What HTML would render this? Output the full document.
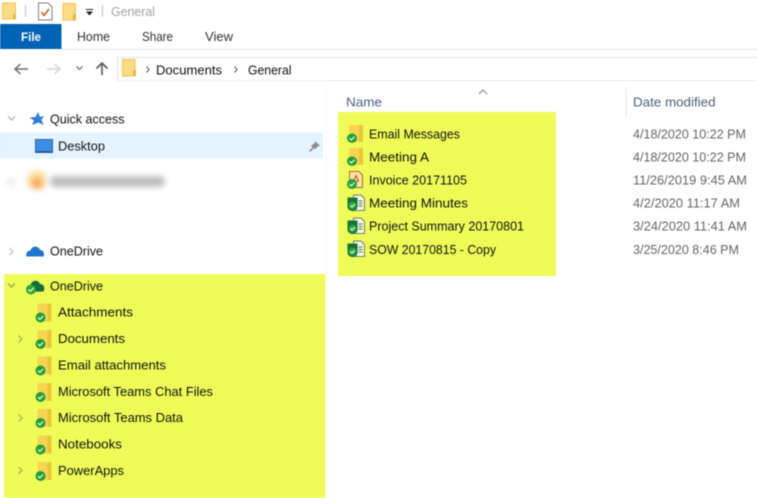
<!DOCTYPE html>
<html><head><meta charset="utf-8"><style>
html,body{margin:0;padding:0;background:#fff;width:757px;height:498px;overflow:hidden}
svg{display:block;filter:blur(.45px)}
text{font-family:"Liberation Sans",sans-serif;font-size:12.5px;fill:#111}
.g{fill:#666}
.m{fill:#333}
</style></head><body>
<svg width="757" height="498" viewBox="0 0 757 498" xmlns="http://www.w3.org/2000/svg">
<defs>
<symbol id="ok" overflow="visible"><circle cx="0" cy="0" r="5" fill="#1f9e3c"/><path d="M-2.500 0 L-.7 1.900 L2.600 -1.600" fill="none" stroke="#dff7c4" stroke-width="1.300"/></symbol>
<symbol id="sf" overflow="visible"><path d="M0 0H14V18H0Z" fill="#f7d550"/><path d="M10 0H14V18H10Z" fill="#ecc43a"/><use href="#ok" x="3" y="14"/></symbol>
<symbol id="doc" overflow="visible"><path d="M6 .5H13.500L17 4V16H6Z" fill="#f6f7e2" stroke="#75806a"/><path d="M11 6.500H15M11 9H15M11 11.500H15" stroke="#3d7c55"/><path d="M0 3H10V12C10 15 7 16.500 5 16.500C3 16.500 0 15 0 12Z" fill="#16713d"/><circle cx="5" cy="11" r="3.900" fill="#2aa63c"/><path d="M3 11 L4.500 12.600 L7.300 9.600" fill="none" stroke="#e6f8cd" stroke-width="1.200"/></symbol>
</defs>
<rect width="757" height="498" fill="#fff"/>

<!-- title bar -->
<path d="M2.500 3H15.500V19H2.500Z" fill="#fbdc82" stroke="#efc550"/>
<rect x="13" y="14" width="3" height="5" fill="#e5b93f"/>
<rect x="25" y="5" width="1" height="12" fill="#c4c4c4"/>
<path d="M38.500 3H48L52 7V20H38.500Z" fill="#fff" stroke="#7f7f7f"/>
<path d="M41.500 12 L44 15.500 L49 9" fill="none" stroke="#c85a22" stroke-width="1.500"/>
<path d="M63 3.500H75.500V20H63Z" fill="#fbdc82" stroke="#efc550"/>
<rect x="73" y="14" width="3" height="6" fill="#e5b93f"/>
<rect x="86" y="9" width="7" height="1" fill="#222"/>
<path d="M86 11.500H93L89.500 15.500Z" fill="#222"/>
<rect x="102" y="5" width="1" height="12" fill="#c4c4c4"/>
<text x="111" y="16" textLength="44" lengthAdjust="spacingAndGlyphs" style="fill:#a2a2a2">General</text>

<!-- ribbon -->
<rect x="0" y="24" width="61.500" height="25" fill="#0163b5"/>
<rect x="61" y="49" width="696" height="1" fill="#e6e6e6"/>
<text x="21" y="41" textLength="20" lengthAdjust="spacingAndGlyphs" style="fill:#fff;font-weight:bold;font-size:12px">File</text>
<text x="77" y="41" textLength="33" lengthAdjust="spacingAndGlyphs" class="m">Home</text>
<text x="142" y="41" textLength="31" lengthAdjust="spacingAndGlyphs" class="m">Share</text>
<text x="205" y="41" textLength="28" lengthAdjust="spacingAndGlyphs" class="m">View</text>

<!-- nav -->
<path d="M28 69H15.500M20.500 64 L15 69 L20.500 74" fill="none" stroke="#6e6e6e" stroke-width="1.500"/>
<path d="M47 69H59.500M54.500 64 L60 69 L54.500 74" fill="none" stroke="#d6d6d6" stroke-width="1.500"/>
<path d="M76.500 66.500 L79.500 69.500 L82.500 66.500" fill="none" stroke="#757575" stroke-width="1.300"/>
<path d="M102 75V63M96.500 68.500 L102 63 L107.500 68.500" fill="none" stroke="#5e5e5e" stroke-width="1.700"/>
<path d="M117.500 81V57.500H757" fill="none" stroke="#e2e2e2"/>
<path d="M117.500 80.500H757" fill="none" stroke="#eeeeee"/>
<path d="M122.500 59.500H135V76H122.500Z" fill="#fbdc82" stroke="#efc550"/>
<rect x="133" y="70" width="3" height="6" fill="#e5b93f"/>
<path d="M146.500 66.500 L149 69.500 L146.500 72.500" fill="none" stroke="#6d6d6d" stroke-width="1.200"/>
<text x="156" y="74.500" textLength="66" lengthAdjust="spacingAndGlyphs">Documents</text>
<path d="M234.500 66.500 L237 69.500 L234.500 72.500" fill="none" stroke="#6d6d6d" stroke-width="1.200"/>
<text x="248" y="74.500" textLength="43.500" lengthAdjust="spacingAndGlyphs">General</text>

<!-- sidebar -->
<path d="M326.500 88V274" stroke="#f0f0f0" stroke-dasharray="1 1"/>
<path d="M8 116.500 L11.500 120 L15 116.500" fill="none" stroke="#a8a8a8" stroke-width="1.200"/>
<path d="M38 112 L40 117 L44 116 L41.500 120 L43.500 125 L38.500 122.500 L32 125 L34 120.500 L29.500 117.500 L35.500 117Z" fill="#2f7fd6"/>
<text x="50" y="123.500" textLength="74.500" lengthAdjust="spacingAndGlyphs">Quick access</text>
<rect x="0" y="132.500" width="323" height="26" fill="#e5f3ff"/>
<rect x="35.500" y="139.500" width="17" height="13" fill="#3a8ee4" stroke="#34689e"/>
<rect x="35" y="151" width="18" height="2" fill="#2a5f96"/>
<text x="58" y="150.500" textLength="47" lengthAdjust="spacingAndGlyphs">Desktop</text>
<path d="M315 141 L320 146 L317.500 146.500 L315 149.500 L314 148 L310 152 L309 151 L312.500 147 L311 145.500 L314.500 143.500Z" fill="#8c8c8c"/>

<g style="filter:blur(3px)">
<circle cx="37" cy="180" r="10" fill="#fde3a6"/>
<circle cx="37" cy="183" r="6" fill="#f9ad66"/>
<rect x="50" y="176" width="115" height="11" rx="5" fill="#a8a8a8" opacity=".75"/>
<circle cx="11" cy="182" r="4" fill="#eaeaea"/>
</g>

<path d="M9.500 248 L13 251.500 L9.500 255" fill="none" stroke="#c4c4c4" stroke-width="1.300"/>
<path d="M26.500 256.500 C25.500 252.500 28 250.500 30.500 250.500 C32 245.500 38.500 245.500 40 250 C43 250 45 253 43.500 256.500Z" fill="#1f74cc"/>
<text x="50" y="255.500" textLength="53" lengthAdjust="spacingAndGlyphs">OneDrive</text>

<!-- left yellow panel -->
<rect x="4" y="274" width="321.500" height="224" fill="#effc58"/>
<path d="M8 283.500 L11.500 287 L15 283.500" fill="none" stroke="#8f9a48" stroke-width="1.200"/>
<path d="M26.500 292 C25.500 287 28 285 30.500 285 C32 279.500 38.500 279.500 40 284 C43.500 283.500 45.500 288 43.500 291.500Z" fill="#126f3c"/>
<circle cx="31" cy="289.500" r="5" fill="#2aa63c"/>
<path d="M28.500 289.500 L30.300 291.400 L33.600 287.900" fill="none" stroke="#e6f8cd" stroke-width="1.300"/>
<text x="50" y="290.500" textLength="53" lengthAdjust="spacingAndGlyphs">OneDrive</text>

<use href="#sf" x="37.500" y="303.500"/>
<text x="58" y="316.500" textLength="75" lengthAdjust="spacingAndGlyphs">Attachments</text>
<use href="#sf" x="37.500" y="330"/>
<path d="M18.500 335.500 L22 339 L18.500 342.500" fill="none" stroke="#a9b45a" stroke-width="1.300"/>
<text x="58" y="343" textLength="67" lengthAdjust="spacingAndGlyphs">Documents</text>
<use href="#sf" x="37.500" y="356.500"/>
<text x="58" y="369.500" textLength="108" lengthAdjust="spacingAndGlyphs">Email attachments</text>
<use href="#sf" x="37.500" y="383"/>
<text x="58" y="396" textLength="155" lengthAdjust="spacingAndGlyphs">Microsoft Teams Chat Files</text>
<use href="#sf" x="37.500" y="409"/>
<path d="M18.500 414.500 L22 418 L18.500 421.500" fill="none" stroke="#a9b45a" stroke-width="1.300"/>
<text x="58" y="422" textLength="125" lengthAdjust="spacingAndGlyphs">Microsoft Teams Data</text>
<use href="#sf" x="37.500" y="435.500"/>
<text x="58" y="448.500" textLength="64" lengthAdjust="spacingAndGlyphs">Notebooks</text>
<use href="#sf" x="37.500" y="462"/>
<path d="M18.500 467 L22 470.500 L18.500 474" fill="none" stroke="#a9b45a" stroke-width="1.300"/>
<text x="58" y="475" textLength="66" lengthAdjust="spacingAndGlyphs">PowerApps</text>

<!-- right pane -->
<rect x="327" y="80.500" width="430" height="1" fill="#f0f0f0"/>
<path d="M479 94 L483 90 L487 94" fill="none" stroke="#8a8a8a" stroke-width="1.200"/>
<text x="346" y="106.500" textLength="36" lengthAdjust="spacingAndGlyphs" style="fill:#4c607a">Name</text>
<rect x="625.500" y="88" width="1" height="28" fill="#e5e5e5"/>
<text x="633" y="106.500" textLength="82.500" lengthAdjust="spacingAndGlyphs" style="fill:#4c607a">Date modified</text>

<rect x="338" y="112" width="218" height="164" fill="#effc58"/>

<g transform="translate(349 125) scale(1 .94)"><use href="#sf"/></g>
<text x="369" y="138.500" textLength="91" lengthAdjust="spacingAndGlyphs">Email Messages</text>
<g transform="translate(349 148) scale(1 .94)"><use href="#sf"/></g>
<text x="369" y="161.500" textLength="60" lengthAdjust="spacingAndGlyphs">Meeting A</text>

<path d="M349.500 171.500H359L362.500 175V187.500H349.500Z" fill="#f5e6a0" stroke="#b8642a"/>
<path d="M356 175.500 L358.500 181 L353.500 182Z" fill="none" stroke="#d1402a"/>
<use href="#ok" x="352" y="184"/>
<text x="369" y="184.500" textLength="98" lengthAdjust="spacingAndGlyphs">Invoice 20171105</text>

<use href="#doc" x="347.500" y="194.500"/>
<text x="369" y="207.500" textLength="99" lengthAdjust="spacingAndGlyphs">Meeting Minutes</text>
<use href="#doc" x="347.500" y="217.500"/>
<text x="369" y="230.500" textLength="155" lengthAdjust="spacingAndGlyphs">Project Summary 20170801</text>
<use href="#doc" x="347.500" y="240.500"/>
<text x="369" y="254" textLength="127" lengthAdjust="spacingAndGlyphs">SOW 20170815 - Copy</text>

<text class="g" x="633" y="138.500" textLength="113" lengthAdjust="spacingAndGlyphs">4/18/2020 10:22 PM</text>
<text class="g" x="633" y="161.500" textLength="113" lengthAdjust="spacingAndGlyphs">4/18/2020 10:22 PM</text>
<text class="g" x="633" y="184.500" textLength="114" lengthAdjust="spacingAndGlyphs">11/26/2019 9:45 AM</text>
<text class="g" x="633" y="207.500" textLength="107" lengthAdjust="spacingAndGlyphs">4/2/2020 11:17 AM</text>
<text class="g" x="633" y="230.500" textLength="114" lengthAdjust="spacingAndGlyphs">3/24/2020 11:41 AM</text>
<text class="g" x="633" y="254" textLength="106" lengthAdjust="spacingAndGlyphs">3/25/2020 8:46 PM</text>
</svg>
</body></html>
